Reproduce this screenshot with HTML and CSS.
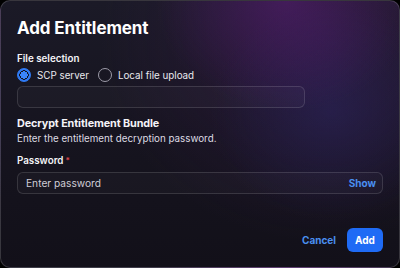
FILE: index.html
```html
<!DOCTYPE html>
<html>
<head>
<meta charset="utf-8">
<link rel="stylesheet" href="styles.css">
</head>
<body>
<div class="modal">
  <h1 class="title">Add Entitlement</h1>
  <div class="field">
    <div class="label">File selection</div>
    <div class="radios">
      <label class="radio"><span class="dot checked"></span>SCP server</label>
      <label class="radio"><span class="dot"></span>Local file upload</label>
    </div>
    <div class="input short"></div>
  </div>
  <h2 class="section">Decrypt Entitlement Bundle</h2>
  <p class="desc">Enter the entitlement decryption password.</p>
  <div class="label pw">Password<span class="req">*</span></div>
  <div class="input full">
    <span class="placeholder">Enter password</span>
    <span class="show">Show</span>
  </div>
  <div class="actions">
    <span class="cancel">Cancel</span>
    <span class="add">Add</span>
  </div>
</div>
</body>
</html>
```
FILE: styles.css
```css
* { box-sizing: border-box; }
html, body { margin: 0; padding: 0; background: #000; }
body {
  width: 400px; height: 268px;
  font-family: Inter, "Noto Sans", sans-serif;
  color: #f2f1f5;
}
.modal {
  width: 400px; height: 268px;
  border: 1px solid rgba(255,255,255,0.16);
  border-radius: 10px;
  padding: 15px 16px 15px 16px;
  display: flex; flex-direction: column;
  background:
    radial-gradient(ellipse 130px 110px at 285px 0px, rgba(90,30,120,0.55), rgba(90,30,120,0) 100%),
    radial-gradient(ellipse 120px 110px at 330px 110px, rgba(45,40,105,0.45), rgba(45,40,105,0) 100%),
    radial-gradient(ellipse 220px 200px at 320px 40px, rgba(55,25,75,0.5), rgba(55,25,75,0) 100%),
    linear-gradient(180deg, #1b1a27 0%, #16141f 50%, #121019 100%);
}
.title {
  margin: 0;
  font-size: 17px; font-weight: 700; letter-spacing: -0.1px;
  line-height: 24px;
  color: #ffffff;
}
.field { margin-top: 12px; }
.label {
  font-size: 9.8px; font-weight: 600; line-height: 14px; color: #f4f3f7;
}
.radios { display: flex; gap: 9px; margin-top: 1px; height: 16px; align-items: center; }
.radio { display: flex; align-items: center; font-size: 9.8px; color: #e9e8ee; gap: 6px; }
.dot {
  width: 14px; height: 14px; border-radius: 50%;
  border: 1.5px solid #9d9ba8;
  display: inline-block; flex: none;
}
.dot.checked {
  border-color: #2f7bf6;
  background: radial-gradient(circle, #3a84f8 0 3.6px, #15131d 3.8px 4.6px, #2f7bf6 4.8px);
}
.input {
  border: 1px solid rgba(255,255,255,0.13);
  border-radius: 6px;
  background: rgba(255,255,255,0.025);
  height: 22px;
}
.input.short { width: 288px; margin-top: 3px; }
.section {
  margin: 8px 0 0 0;
  font-size: 10.8px; font-weight: 700; line-height: 16px; color: #f4f3f7;
  letter-spacing: -0.1px;
}
.desc { margin: 0; font-size: 9.8px; line-height: 14px; color: #dddbe3; }
.pw { margin-top: 8px; }
.req { color: #e5484d; font-size: 8px; vertical-align: top; margin-left: 2px; position: relative; top: -1px; }
.input.full {
  margin-top: 4px; width: 366px;
  display: flex; align-items: center; justify-content: space-between;
  padding: 0 6px 0 8px;
}
.placeholder { font-size: 10.2px; color: #cfcdd6; }
.show { font-size: 10px; font-weight: 700; color: #4a8ff0; }
.actions {
  margin-top: auto;
  display: flex; justify-content: flex-end; align-items: center; gap: 11px;
}
.cancel { font-size: 10px; font-weight: 700; color: #4a8ff0; }
.add {
  background: #1f6bf5; color: #fff;
  font-size: 10px; font-weight: 700;
  height: 24px; width: 36px; border-radius: 6px;
  display: flex; align-items: center; justify-content: center;
}
```
